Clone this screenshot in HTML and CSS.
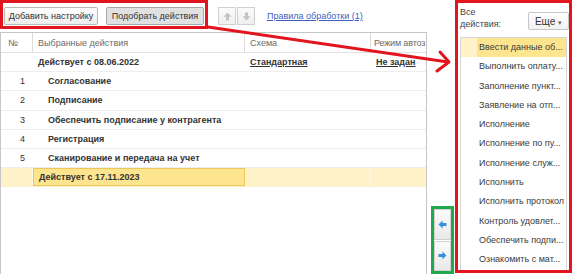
FILE: index.html
```html
<!DOCTYPE html>
<html>
<head>
    <title>Настройка действий</title>
    <link rel="stylesheet" href="styles.css">
</head>
<body>
    <div class="main">
        <div class="toolbar">
            <div class="cmds mark-red">
                <button class="btn btn-add">Добавить настройку</button>
                <button class="btn btn-pick pressed">Подобрать действия</button>
            </div>
            <div class="move">
                <button class="move-btn">
                    <svg width="9" height="9" viewBox="0 0 9 9"><path d="M4.5 0.5 L8.5 4.8 L6 4.8 L6 8.5 L3 8.5 L3 4.8 L0.5 4.8 Z" fill="#c3c3c3"/></svg>
                </button>
                <button class="move-btn">
                    <svg width="9" height="9" viewBox="0 0 9 9"><path d="M4.5 8.5 L8.5 4.2 L6 4.2 L6 0.5 L3 0.5 L3 4.2 L0.5 4.2 Z" fill="#c3c3c3"/></svg>
                </button>
            </div>
            <a class="rules" href="#">Правила обработки (1)</a>
        </div>

        <div class="grid">
            <div class="head">
                <div class="cell c-num">№</div>
                <div class="cell c-act">Выбранные действия</div>
                <div class="cell c-scheme">Схема</div>
                <div class="cell c-mode mode-title">Режим автоз</div>
            </div>
            <div class="row">
                <div class="cell c-num"></div>
                <div class="cell c-act group">Действует с 08.06.2022</div>
                <div class="cell c-scheme"><span class="ref">Стандартная</span></div>
                <div class="cell c-mode"><span class="ref">Не задан</span></div>
            </div>
            <div class="row">
                <div class="cell c-num num">1</div>
                <div class="cell c-act item">Согласование</div>
                <div class="cell c-scheme"></div>
                <div class="cell c-mode"></div>
            </div>
            <div class="row">
                <div class="cell c-num num">2</div>
                <div class="cell c-act item">Подписание</div>
                <div class="cell c-scheme"></div>
                <div class="cell c-mode"></div>
            </div>
            <div class="row">
                <div class="cell c-num num">3</div>
                <div class="cell c-act item">Обеспечить подписание у контрагента</div>
                <div class="cell c-scheme"></div>
                <div class="cell c-mode"></div>
            </div>
            <div class="row">
                <div class="cell c-num num">4</div>
                <div class="cell c-act item">Регистрация</div>
                <div class="cell c-scheme"></div>
                <div class="cell c-mode"></div>
            </div>
            <div class="row">
                <div class="cell c-num num">5</div>
                <div class="cell c-act item">Сканирование и передача на учет</div>
                <div class="cell c-scheme"></div>
                <div class="cell c-mode"></div>
            </div>
            <div class="row current">
                <div class="cell c-num"></div>
                <div class="cell c-act group focus">Действует с 17.11.2023</div>
                <div class="cell c-scheme"></div>
                <div class="cell c-mode"></div>
            </div>
        </div>
    </div>

    <div class="side">
        <div class="shift mark-green">
            <button class="shift-btn">
                <svg width="9" height="9" viewBox="0 0 9 9"><path d="M0.5 4.5 L4.6 0.6 L4.6 3 L8.5 3 L8.5 6 L4.6 6 L4.6 8.4 Z" fill="#3a8fd9"/></svg>
            </button>
            <button class="shift-btn">
                <svg width="9" height="9" viewBox="0 0 9 9"><path d="M8.5 4.5 L4.4 0.6 L4.4 3 L0.5 3 L0.5 6 L4.4 6 L4.4 8.4 Z" fill="#3a8fd9"/></svg>
            </button>
        </div>
    </div>

    <div class="all mark-red">
        <div class="all-head">
            <div class="all-label">Все<br>действия:</div>
            <button class="btn more">Еще <span class="caret">▾</span></button>
        </div>
        <div class="list">
            <div class="opt sel">Ввести данные об...</div>
            <div class="opt">Выполнить оплату...</div>
            <div class="opt">Заполнение пункт...</div>
            <div class="opt">Заявление на отп...</div>
            <div class="opt">Исполнение</div>
            <div class="opt">Исполнение по пу...</div>
            <div class="opt">Исполнение служ...</div>
            <div class="opt">Исполнить</div>
            <div class="opt">Исполнить протокол</div>
            <div class="opt">Контроль удовлет...</div>
            <div class="opt">Обеспечить подпи...</div>
            <div class="opt">Ознакомить с мат...</div>
        </div>
    </div>

    <svg class="pointer" width="572" height="274" viewBox="0 0 572 274">
        <g stroke="#e2151f" stroke-width="3" fill="none" stroke-linecap="round" stroke-linejoin="round">
            <line x1="208" y1="27" x2="448" y2="62"/>
            <polyline points="440,52 449,62 437,71"/>
        </g>
    </svg>
</body>
</html>
```

FILE: styles.css
```css
body {
    margin: 0;
    height: 274px;
    overflow: hidden;
    position: relative;
    display: flex;
    background-color: #fff;
    font-family: "Liberation Sans", Arial, sans-serif;
    font-size: 9px;
    color: #333;
}

.mark-red {
    border: 3px solid #e2151f;
}

.mark-green {
    border: 3px solid #20a84b;
}

/* left part: toolbar + table */

.main {
    width: 427px;
    display: flex;
    flex-direction: column;
}

.toolbar {
    height: 32px;
    display: flex;
    align-items: flex-start;
}

.cmds {
    box-sizing: border-box;
    width: 208px;
    height: 29px;
    display: flex;
    gap: 8px;
    padding: 4px 0 0 1px;
}

.btn {
    box-sizing: border-box;
    height: 18px;
    padding: 0;
    border: 1px solid #b8b8b8;
    border-radius: 2px;
    background: linear-gradient(#fefefe, #ededed);
    font: inherit;
    color: #333;
}

.btn-add {
    width: 94px;
}

.btn-pick {
    width: 98px;
}

.btn.pressed {
    background: #e1e1e1;
    border-color: #a8a8a8;
}

.move {
    display: flex;
    margin: 7px 0 0 10px;
}

.move-btn {
    box-sizing: border-box;
    width: 18px;
    height: 18px;
    padding: 0;
    border: 1px solid #cfcfcf;
    background: linear-gradient(#fbfbfb, #efefef);
    display: flex;
    align-items: center;
    justify-content: center;
}

.move-btn + .move-btn {
    margin-left: 1px;
}

.rules {
    margin: 11px 0 0 12px;
    color: #3d5fc2;
    text-decoration: underline;
}

.grid {
    flex: 1;
    border: 1px solid #c6c6c6;
    border-bottom: none;
}

.head,
.row {
    display: flex;
    box-sizing: border-box;
}

.head {
    height: 20px;
    border-bottom: 1px solid #e2e2e2;
    color: #6a6a6a;
}

.head .cell {
    border-right: 1px solid #dcdcdc;
}

.head .c-num {
    padding-left: 7px;
}

.head .mode-title {
    padding-left: 3px;
    letter-spacing: -0.15px;
}

.row {
    height: 19.2px;
    border-bottom: 1px solid #eeeeee;
}

.cell {
    box-sizing: border-box;
    display: flex;
    align-items: center;
    white-space: nowrap;
    overflow: hidden;
    padding-left: 5px;
}

.c-num {
    width: 32px;
}

.c-act {
    width: 212px;
}

.c-scheme {
    width: 126px;
}

.c-mode {
    flex: 1;
    border-right: none !important;
}

.num {
    justify-content: flex-end;
    padding-right: 8px;
}

.group {
    font-weight: bold;
}

.item {
    padding-left: 15px;
    font-weight: bold;
}

.ref {
    font-weight: bold;
    text-decoration: underline;
}

.row.current {
    background-color: #fff2c8;
    border-bottom-color: #fbeecd;
}

.row.current .cell {
    border-right: 1px solid #fff8e4;
}

.row.current .focus {
    background-color: #fde48e;
    border: 1px solid #ecc75c;
}

/* middle: move buttons */

.side {
    width: 28px;
    box-sizing: border-box;
    padding-left: 4px;
    display: flex;
    flex-direction: column;
    justify-content: flex-end;
}

.shift {
    box-sizing: border-box;
    width: 23px;
    height: 68px;
    display: flex;
    flex-direction: column;
    gap: 1px;
}

.shift-btn {
    flex: 1;
    padding: 0;
    border: 1px solid #d2d2d2;
    background: linear-gradient(#fbfbfb, #e9e9e9);
    display: flex;
    align-items: center;
    justify-content: center;
}

/* right: all actions */

.all {
    box-sizing: border-box;
    width: 117px;
    height: 273px;
    display: flex;
    flex-direction: column;
}

.all-head {
    height: 31px;
    display: flex;
    justify-content: space-between;
    align-items: flex-start;
    padding: 3px 0 0 2px;
}

.all-label {
    line-height: 12px;
    color: #444;
}

.more {
    width: 41px;
    margin-top: 6px;
    border-color: #c6c6c6;
    background: linear-gradient(#ffffff, #f1f1f1);
    font-size: 10px;
}

.caret {
    font-size: 7px;
    color: #666;
}

.list {
    flex: 1;
    margin: 0 2px;
    border: 1px solid #d6d6d6;
    border-bottom: none;
}

.opt {
    height: 19.3px;
    line-height: 19.3px;
    padding-left: 18px;
    white-space: nowrap;
    overflow: hidden;
    color: #3a3a3a;
}

.opt.sel {
    background: linear-gradient(to right, #fff2c8 16px, #fde48e 16px);
}

.pointer {
    position: absolute;
    left: 0;
    top: 0;
    pointer-events: none;
}
```
